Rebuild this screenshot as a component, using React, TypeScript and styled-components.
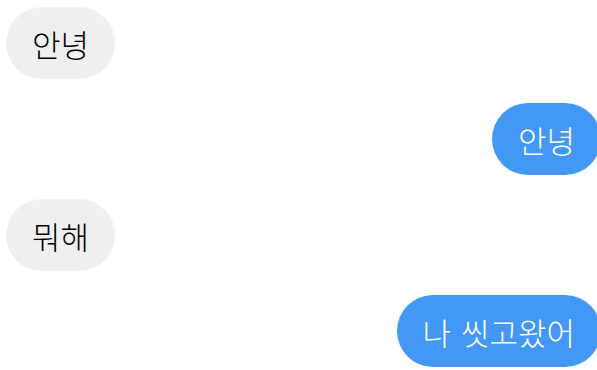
import React from 'react'
import styled, { createGlobalStyle } from 'styled-components'

type Message = { text: string; mine: boolean }

const messages: Message[] = [
  { text: '안녕', mine: false },
  { text: '안녕', mine: true },
  { text: '뭐해', mine: false },
  { text: '나 씻고왔어', mine: true },
]

const GlobalStyle = createGlobalStyle`
  html, body {
    margin: 0;
    padding: 0;
    background: #fff;
  }
  body {
    font-family: 'Noto Sans CJK KR', 'Noto Sans', sans-serif;
  }
`

const Chat = styled.div`
  display: flex;
  flex-direction: column;
  gap: 24px;
  padding: 7px 0 0 6px;
  width: 595px;
  overflow: hidden;
`

const Row = styled.div<{ $mine: boolean }>`
  display: flex;
  justify-content: ${(p) => (p.$mine ? 'flex-end' : 'flex-start')};
`

const Bubble = styled.div<{ $mine: boolean }>`
  height: 72px;
  display: flex;
  align-items: center;
  padding: 0 26px;
  border-radius: 36px;
  font-size: 31px;
  font-weight: 300;
  line-height: 1;
  word-spacing: 3px;
  white-space: nowrap;
  background: ${(p) => (p.$mine ? '#4398f5' : '#efefef')};
  color: ${(p) => (p.$mine ? '#fff' : '#000')};
`

const App: React.FC = () => {
  return (
    <>
      <GlobalStyle />
      <Chat>
        {messages.map((m, i) => (
          <Row key={i} $mine={m.mine}>
            <Bubble $mine={m.mine}>{m.text}</Bubble>
          </Row>
        ))}
      </Chat>
    </>
  )
}

export default App
